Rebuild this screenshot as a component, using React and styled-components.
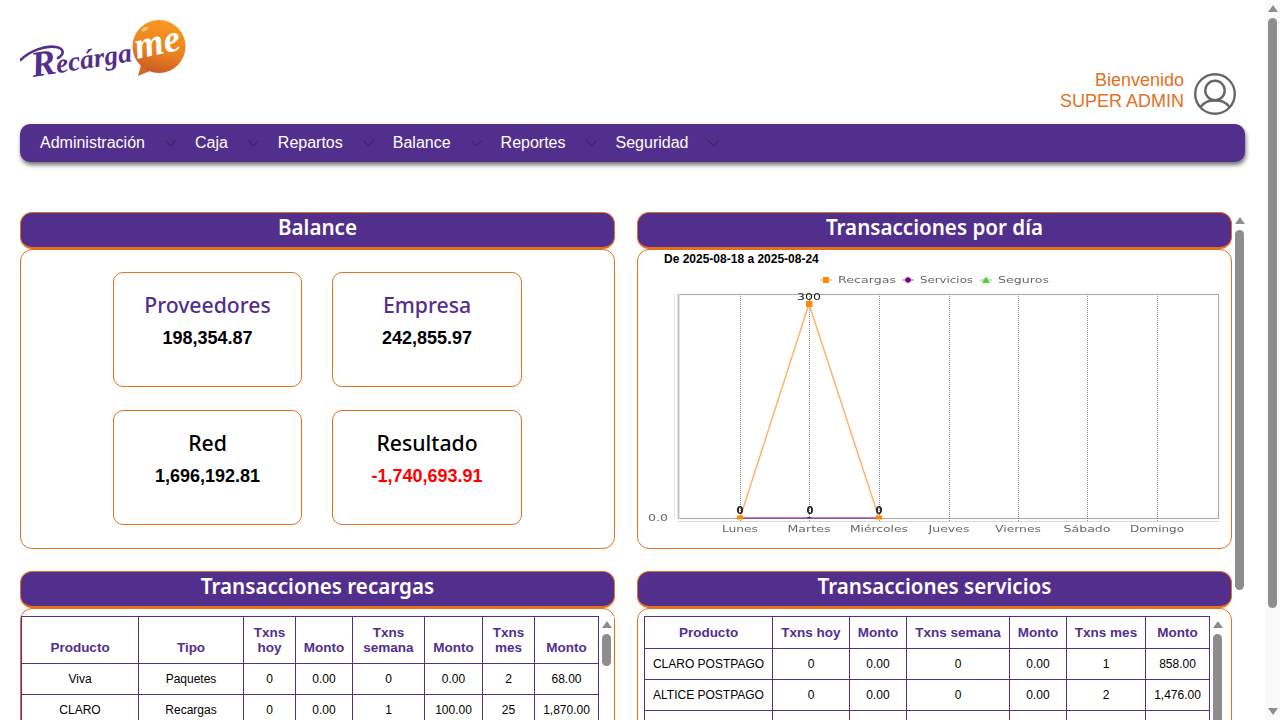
import styled, { createGlobalStyle } from "styled-components";

const PURPLE = "#522f8d";
const ORANGE = "#e2701f";

const GlobalStyle = createGlobalStyle`
  html, body {
    margin: 0;
    height: 100%;
    overflow: hidden;
    background: #fff;
    font-family: "Liberation Sans", Arial, sans-serif;
  }
`;

const Shell = styled.div`
  display: flex;
  width: 1280px;
  height: 720px;
  overflow: hidden;
`;
const Main = styled.main`
  flex: 1;
  min-width: 0;
  padding: 0 18px 0 20px;
`;
const Header = styled.header`
  display: flex;
  justify-content: space-between;
  height: 124px;
  padding-right: 10px;
`;
const LogoWrap = styled.div`
  padding-top: 10px;
`;
const UserBox = styled.div`
  display: flex;
  align-items: center;
  gap: 9px;
  height: 42px;
  margin-top: 73px;
`;
const UserText = styled.div`
  padding-bottom: 6px;
  color: ${ORANGE};
  font-size: 18px;
  line-height: 21px;
  text-align: right;
`;
const Nav = styled.nav`
  display: flex;
  align-items: center;
  gap: 19px;
  height: 38px;
  margin-right: 2px;
  padding-left: 20px;
  border-radius: 10px;
  background: ${PURPLE};
  box-shadow: 1px 3px 4px rgba(0, 0, 0, 0.55);
`;
const NavItem = styled.a`
  display: flex;
  align-items: center;
  gap: 20px;
  color: #fff;
  font-size: 16px;
`;
const Dashboard = styled.div`
  display: flex;
  margin-top: 50px;
`;
const Grid = styled.div`
  display: grid;
  grid-template-columns: 595px 595px;
  gap: 22px;
  width: 1212px;
  flex: none;
`;
const Panel = styled.section`
  display: flex;
  flex-direction: column;
`;
const PanelTitle = styled.h2`
  box-sizing: border-box;
  height: 37px;
  margin: 0;
  border: 1px solid ${ORANGE};
  border-bottom-width: 2px;
  border-radius: 12px;
  background: ${PURPLE};
  color: #fff;
  font: 600 20.6px/28px "Noto Sans", sans-serif;
  text-align: center;
`;
const PanelBody = styled.div`
  box-sizing: border-box;
  height: ${(p) => p.$height}px;
  border: 1px solid ${ORANGE};
  border-radius: 12px;
`;
const CardGrid = styled.div`
  display: grid;
  grid-template-columns: 189px 190px;
  grid-auto-rows: 115px;
  justify-content: center;
  gap: 23px 30px;
  padding-top: 22px;
`;
const Card = styled.div`
  box-sizing: border-box;
  border: 1px solid ${ORANGE};
  border-radius: 10px;
  padding-top: 17px;
  text-align: center;
`;
const CardName = styled.div`
  color: ${(p) => (p.$accent ? PURPLE : "#000")};
  font: 500 21.2px/30px "Noto Sans", sans-serif;
`;
const CardValue = styled.div`
  margin-top: 8px;
  color: ${(p) => (p.$negative ? "#f00" : "#000")};
  font-size: 18px;
  font-weight: 700;
  line-height: 21px;
`;
const ChartHeading = styled.div`
  height: 18px;
  padding-left: 26px;
  color: #000;
  font-size: 12px;
  font-weight: 700;
  line-height: 18px;
`;
const ChartSvg = styled.svg`
  display: block;
  filter: blur(0.3px);
  text {
    font-family: "DejaVu Sans", sans-serif;
    font-size: 9.5px;
    fill: #666;
  }
  text.point {
    font-size: 10.5px;
    font-weight: 700;
    fill: #222;
  }
  text.peak {
    fill: #222;
  }
`;
const TablePanelBody = styled(PanelBody)`
  display: flex;
  align-items: stretch;
  padding: 7px 6px 0 ${(p) => p.$left}px;
`;
const Table = styled.table`
  flex: none;
  align-self: flex-start;
  table-layout: fixed;
  width: ${(p) => p.$width}px;
  border-collapse: collapse;
  color: #000;
  font-size: 12px;
  text-align: center;
  th, td {
    box-sizing: border-box;
    padding: 0 2px;
    border: 1px solid ${PURPLE};
  }
  th {
    color: ${PURPLE};
    font-size: 13.5px;
    line-height: 15px;
  }
  td {
    height: 31px;
  }
`;
const HeadRow = styled.tr`
  height: ${(p) => p.$height}px;
  th {
    vertical-align: ${(p) => (p.$height > 40 ? "bottom" : "middle")};
    padding-bottom: ${(p) => (p.$height > 40 ? "8px" : "1px")};
  }
`;
const RailBox = styled.div`
  display: flex;
  flex: none;
  flex-direction: column;
  align-items: center;
  box-sizing: border-box;
  width: 15px;
  padding: 5px 0;
  background: ${(p) => (p.$tinted ? "#fafafa" : "#fff")};
`;
const ArrowUp = styled.span`
  flex: none;
  border-left: 5px solid transparent;
  border-right: 5px solid transparent;
  border-bottom: 7px solid #8d8d8d;
`;
const ArrowDown = styled.span`
  flex: none;
  margin-top: auto;
  border-left: 5px solid transparent;
  border-right: 5px solid transparent;
  border-top: 7px solid #8d8d8d;
`;
const Thumb = styled.span`
  flex: none;
  width: 9px;
  margin-top: 6px;
  border-radius: 5px;
  background: #8d8d8d;
`;

const Rail = ({ thumb, tinted }) => (
  <RailBox $tinted={tinted}>
    <ArrowUp />
    <Thumb style={{ height: thumb }} />
    <ArrowDown />
  </RailBox>
);

const Chevron = () => (
  <svg width="11" height="7" viewBox="0 0 11 7" fill="none" stroke="#2c2745" strokeWidth="1">
    <polyline points="0.5,0.5 5.5,6 10.5,0.5" />
  </svg>
);

const UserIcon = () => (
  <svg width="44" height="44" viewBox="0 0 44 44" fill="none" stroke="#666" strokeWidth="2.4">
    <circle cx="22" cy="22" r="19.8" />
    <circle cx="22" cy="18.5" r="9.7" />
    <path d="M7.5 35 C12 29.5 16 28.5 22 28.5 C28 28.5 32 29.5 36.5 35" />
  </svg>
);

const Logo = () => (
  <svg width="170" height="85" viewBox="20 10 170 85">
    <defs>
      <linearGradient id="bubble" x1="0.65" y1="0" x2="0.4" y2="1">
        <stop offset="0" stopColor="#f89a20" />
        <stop offset="0.6" stopColor="#ea8022" />
        <stop offset="1" stopColor="#c95a24" />
      </linearGradient>
    </defs>
    <path d="M20.5 60 C30 51 45 45 56 47 C64 48.5 65 54 58 58" fill="none" stroke="#522f8d" strokeWidth="2.6" strokeLinecap="round" />
    <text x="33" y="77" transform="rotate(-9 33 77)" fill="#522f8d" fontFamily="'Liberation Serif', serif" fontStyle="italic" fontWeight="700" fontSize="27" textLength="101" lengthAdjust="spacingAndGlyphs">
      <tspan fontSize="36">R</tspan>ecárga
    </text>
    <path d="M138 76 L141 65 L150 71 Z" fill="#d2692a" />
    <circle cx="159" cy="46.5" r="26.5" fill="url(#bubble)" />
    <ellipse cx="145" cy="29" rx="4" ry="1.6" transform="rotate(-30 145 29)" fill="#fbc27c" />
    <text x="137" y="59" transform="rotate(-12 137 59)" fill="#fff" fontFamily="'Liberation Serif', serif" fontStyle="italic" fontWeight="700" fontSize="38" textLength="46" lengthAdjust="spacingAndGlyphs">me</text>
  </svg>
);

const days = [
  ["Lunes", 740, 36],
  ["Martes", 809, 43],
  ["Miércoles", 879, 58],
  ["Jueves", 949, 41],
  ["Viernes", 1018, 46],
  ["Sábado", 1087, 47],
  ["Domingo", 1157, 54],
];

const ChartLabel = ({ x, y, w, anchor, kind, children }) => (
  <text x={x} y={y} textAnchor={anchor} textLength={w} lengthAdjust="spacingAndGlyphs" className={kind}>
    {children}
  </text>
);

const Chart = () => (
  <ChartSvg width="593" height="280" viewBox="638 268 593 280">
    <line x1="820" x2="832" y1="280" y2="280" stroke="#fdc183" strokeWidth="1.5" />
    <rect x="823" y="277" width="6" height="6" fill="#ff8a00" />
    <ChartLabel x={838} y={283} w={58}>Recargas</ChartLabel>
    <line x1="902" x2="914" y1="280" y2="280" stroke="#c78ac7" strokeWidth="1.5" />
    <circle cx="908" cy="280" r="2.8" fill="#800080" />
    <ChartLabel x={920} y={283} w={53}>Servicios</ChartLabel>
    <line x1="980" x2="992" y1="280" y2="280" stroke="#a5e69a" strokeWidth="1.5" />
    <polygon points="986,276.5 990,283 982,283" fill="#4fce3e" />
    <ChartLabel x={998} y={283} w={51}>Seguros</ChartLabel>

    <rect x="678.5" y="294.5" width="540" height="224" fill="none" stroke="#a9a9a9" />
    <line x1="678.5" x2="678.5" y1="294" y2="519" stroke="#c4c4c4" strokeWidth="2" />
    <line x1="674.5" x2="674.5" y1="294" y2="519" stroke="#e4e4e4" />
    <line x1="678" x2="1219" y1="521.5" y2="521.5" stroke="#d8d8d8" />
    {days.map(([name, x, w]) => (
      <g key={name}>
        <line x1={x + 0.5} x2={x + 0.5} y1="294" y2="522" stroke="#888" strokeDasharray="1 1" />
        <ChartLabel x={x} y={532} w={w} anchor="middle">{name}</ChartLabel>
      </g>
    ))}
    <ChartLabel x={648} y={521} w={20}>0.0</ChartLabel>

    <polyline points="740,518 809,304 879,518" fill="none" stroke="#fdb469" strokeWidth="1.5" />
    <line x1="740" x2="879" y1="518" y2="518" stroke="#800080" />
    <rect x="737" y="515.5" width="6" height="4" fill="#ff8a00" />
    <rect x="806" y="301" width="6.5" height="6" fill="#ff8a00" />
    <rect x="876" y="515.5" width="6" height="4" fill="#ff8a00" />
    <path d="M806.5 518 a3 2.5 0 0 1 5 0 Z" fill="#800080" />
    <ChartLabel x={809} y={300} w={24} anchor="middle" kind="peak">300</ChartLabel>
    <ChartLabel x={740} y={514} w={7} anchor="middle" kind="point">0</ChartLabel>
    <ChartLabel x={810} y={514} w={7} anchor="middle" kind="point">0</ChartLabel>
    <ChartLabel x={879} y={514} w={7} anchor="middle" kind="point">0</ChartLabel>
  </ChartSvg>
);

const recargasCols = [117, 105, 52, 57, 72, 58, 52, 64];
const recargasHead = ["Producto", "Tipo", "Txns hoy", "Monto", "Txns semana", "Monto", "Txns mes", "Monto"];
const recargasRows = [
  ["Viva", "Paquetes", "0", "0.00", "0", "0.00", "2", "68.00"],
  ["CLARO", "Recargas", "0", "0.00", "1", "100.00", "25", "1,870.00"],
];

const serviciosCols = [128, 77, 57, 103, 57, 79, 64];
const serviciosHead = ["Producto", "Txns hoy", "Monto", "Txns semana", "Monto", "Txns mes", "Monto"];
const serviciosRows = [
  ["CLARO POSTPAGO", "0", "0.00", "0", "0.00", "1", "858.00"],
  ["ALTICE POSTPAGO", "0", "0.00", "0", "0.00", "2", "1,476.00"],
  ["", "", "", "", "", "", ""],
];

const DataTable = ({ cols, head, rows, headHeight }) => (
  <Table $width={cols.reduce((a, b) => a + b, 0)}>
    <colgroup>
      {cols.map((w, i) => (
        <col key={i} width={w} />
      ))}
    </colgroup>
    <thead>
      <HeadRow $height={headHeight}>
        {head.map((h, i) => (
          <th key={i}>{h}</th>
        ))}
      </HeadRow>
    </thead>
    <tbody>
      {rows.map((row, i) => (
        <tr key={i}>
          {row.map((c, j) => (
            <td key={j}>{c}</td>
          ))}
        </tr>
      ))}
    </tbody>
  </Table>
);

const menu = ["Administración", "Caja", "Repartos", "Balance", "Reportes", "Seguridad"];

export default function App() {
  return (
    <>
      <GlobalStyle />
      <Shell>
        <Main>
          <Header>
            <LogoWrap>
              <Logo />
            </LogoWrap>
            <UserBox>
              <UserText>
                Bienvenido
                <br />
                SUPER ADMIN
              </UserText>
              <UserIcon />
            </UserBox>
          </Header>
          <Nav>
            {menu.map((m) => (
              <NavItem key={m}>
                {m}
                <Chevron />
              </NavItem>
            ))}
          </Nav>
          <Dashboard>
            <Grid>
              <Panel>
                <PanelTitle>Balance</PanelTitle>
                <PanelBody $height={300}>
                  <CardGrid>
                    <Card>
                      <CardName $accent>Proveedores</CardName>
                      <CardValue>198,354.87</CardValue>
                    </Card>
                    <Card>
                      <CardName $accent>Empresa</CardName>
                      <CardValue>242,855.97</CardValue>
                    </Card>
                    <Card>
                      <CardName>Red</CardName>
                      <CardValue>1,696,192.81</CardValue>
                    </Card>
                    <Card>
                      <CardName>Resultado</CardName>
                      <CardValue $negative>-1,740,693.91</CardValue>
                    </Card>
                  </CardGrid>
                </PanelBody>
              </Panel>
              <Panel>
                <PanelTitle>Transacciones por día</PanelTitle>
                <PanelBody $height={300}>
                  <ChartHeading>De 2025-08-18 a 2025-08-24</ChartHeading>
                  <Chart />
                </PanelBody>
              </Panel>
              <Panel>
                <PanelTitle>Transacciones recargas</PanelTitle>
                <TablePanelBody $height={300} $left={0}>
                  <DataTable cols={recargasCols} head={recargasHead} rows={recargasRows} headHeight={47} />
                  <Rail thumb={32} />
                </TablePanelBody>
              </Panel>
              <Panel>
                <PanelTitle>Transacciones servicios</PanelTitle>
                <TablePanelBody $height={300} $left={6}>
                  <DataTable cols={serviciosCols} head={serviciosHead} rows={serviciosRows} headHeight={32} />
                  <Rail thumb={200} />
                </TablePanelBody>
              </Panel>
            </Grid>
            <Rail thumb={360} />
          </Dashboard>
        </Main>
        <Rail thumb={590} tinted />
      </Shell>
    </>
  );
}
